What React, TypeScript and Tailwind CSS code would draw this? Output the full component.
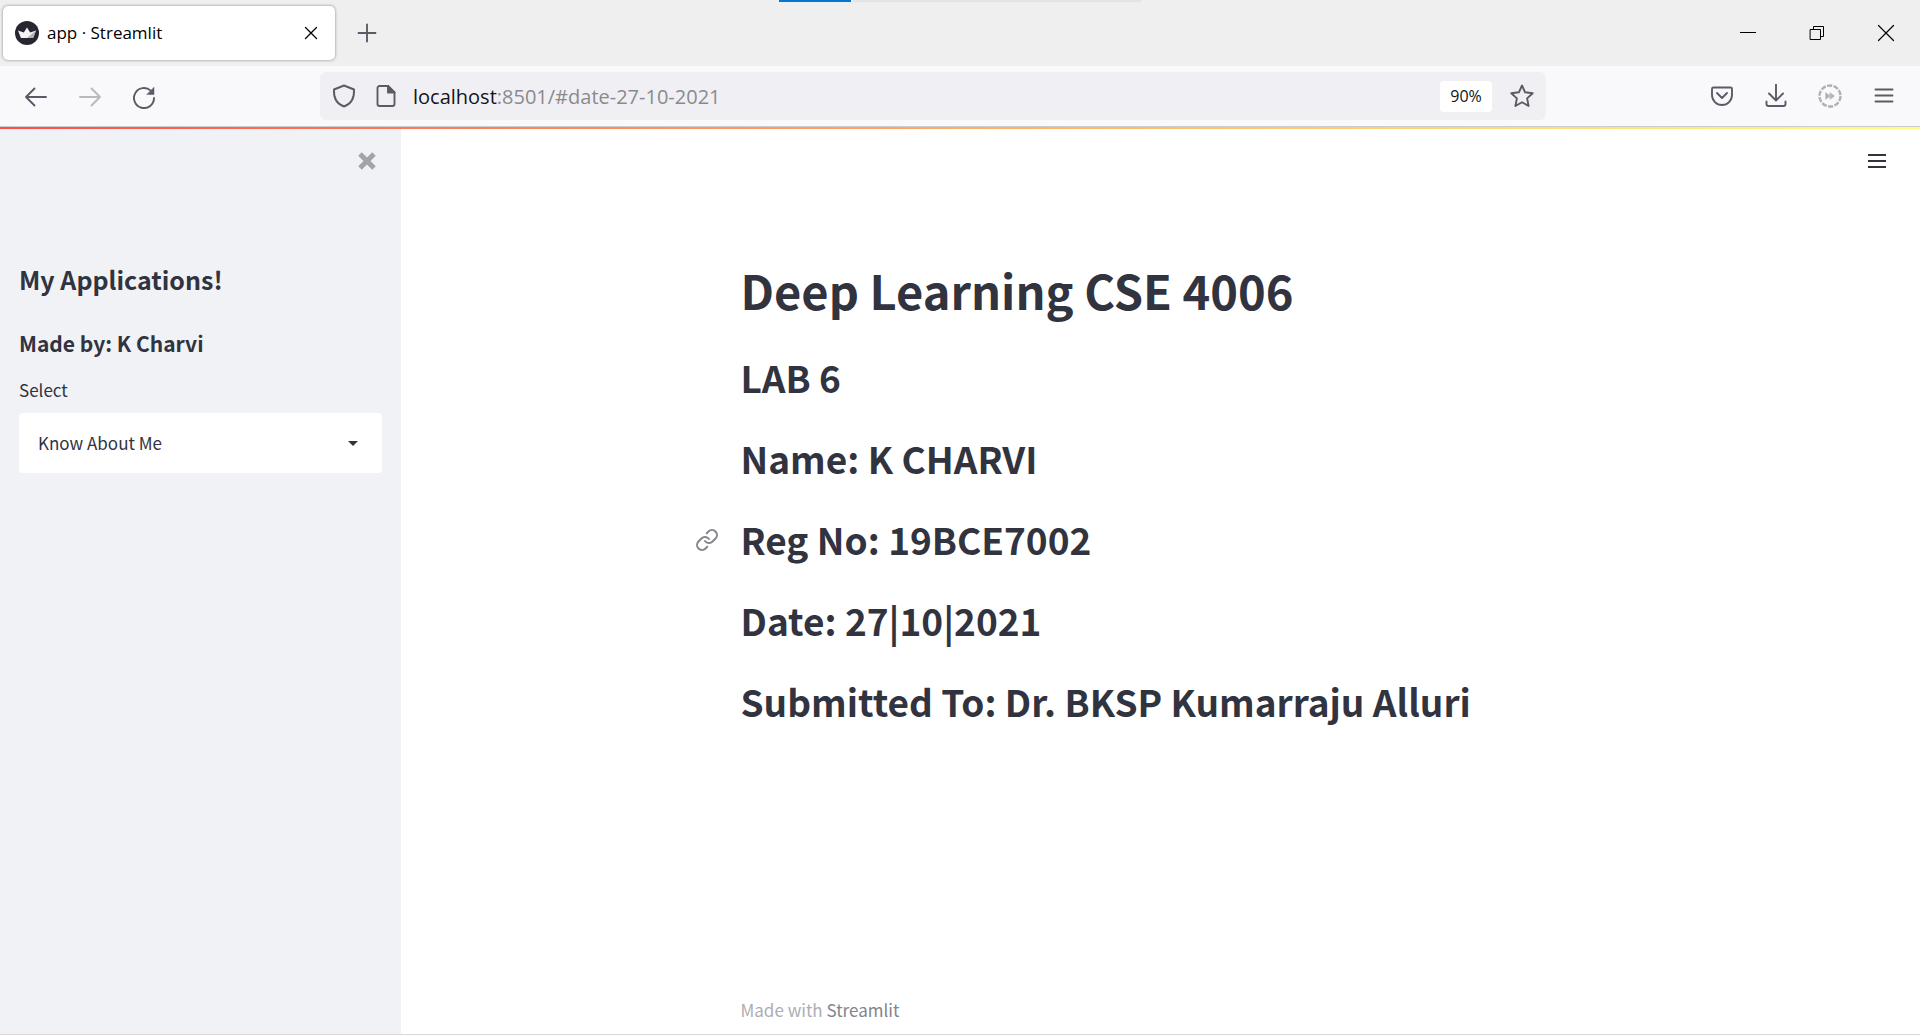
import React from "react";

const cjk = "font-['Noto_Sans_CJK_JP',sans-serif]";

function Icon({ children, className = "size-6", width = 1.9 }: { children: React.ReactNode; className?: string; width?: number }) {
  return (
    <svg viewBox="0 0 24 24" className={className} fill="none" stroke="currentColor" strokeWidth={width} strokeLinecap="round" strokeLinejoin="round" aria-hidden="true">
      {children}
    </svg>
  );
}

function TabStrip() {
  return (
    <header className="relative flex h-[66px] items-center bg-[#efefef] text-black">
      <div className="absolute left-1/2 top-0 flex h-[2px] w-[362px] -translate-x-1/2 gap-[2px]">
        <div className="w-[72px] bg-[#0078d7]" />
        <div className="flex-1 bg-[#e4e4e4]" />
      </div>
      <div className="ml-[3px] flex h-[54px] w-[332px] items-center rounded-[5px] bg-white pl-3 pr-3 shadow-[0_0_3px_rgba(80,80,100,0.7)]">
        <svg viewBox="0 0 24 24" className="size-6" aria-hidden="true">
          <circle cx="12" cy="12" r="12" fill="#262730" />
          <path d="M3 9.600 8.800 11.600 12 6.500 15.200 11.600 21 9.600 18.300 16.400Q18 17 17.200 17H6.800Q6 17 5.700 16.400Z" fill="#f4f4f4" />
          <path d="M12 17 21 9.600 18.300 16.400Q18 17 17.200 17Z" fill="#b5b5b8" />
        </svg>
        <span className="ml-2 flex-1 text-[17px] leading-6">app · Streamlit</span>
        <button aria-label="Close tab">
          <Icon className="size-6" width={1.3}><path d="M6.500 6.500 17.500 17.500M17.500 6.500 6.500 17.500" /></Icon>
        </button>
      </div>
      <button aria-label="New tab" className="ml-5 text-[#5b5b66]">
        <Icon><path d="M12 3.500v17M3.500 12h17" /></Icon>
      </button>
      <div className="ml-auto mr-[22px] flex gap-[45px]">
        <button aria-label="Minimize"><Icon width={1}><path d="M4.500 11.500h15" shapeRendering="crispEdges" /></Icon></button>
        <button aria-label="Restore"><Icon width={1}><path d="M5.500 8.500h10v10h-10zM8.500 8.500v-3h10v10h-3" strokeLinejoin="miter" /></Icon></button>
        <button aria-label="Close window"><Icon width={1.2}><path d="M4.500 4.500l15 15M19.500 4.500l-15 15" /></Icon></button>
      </div>
    </header>
  );
}

function Toolbar() {
  return (
    <nav className="flex h-[61px] items-center border-b border-[#ccccd0] bg-[#f9f9fb] pl-6 pr-6 text-[#5b5b66]">
      <div className="flex gap-[30px] pt-[2px]">
        <button aria-label="Back"><Icon><path d="M22 12H2M10.500 3.500 2 12l8.500 8.500" /></Icon></button>
        <button aria-label="Forward" className="text-[#b9b9be]"><Icon><path d="M2 12h20M13.500 3.500 22 12l-8.500 8.500" /></Icon></button>
        <button aria-label="Reload">
          <Icon><path d="M22 13a10 10 0 1 1-3.300-7.400" /><path d="M22 2.500v7h-7z" fill="currentColor" strokeWidth={0.500} /></Icon>
        </button>
      </div>
      <div className="mx-[164px] flex h-12 flex-1 items-center rounded-md bg-[#f0f0f4] pl-3">
        <Icon><path d="M12 1.500 22 5.500C22.500 14 19 20 12 22.500 5 20 1.500 14 2 5.500Z" /></Icon>
        <Icon className="ml-[18px] size-6"><path d="M14 2H5.500A2 2 0 0 0 3.500 4v16a2 2 0 0 0 2 2h13a2 2 0 0 0 2-2V8.500z" /><path d="M14 2v6.500h6.500z" fill="currentColor" /></Icon>
        <div className="relative ml-[15px] flex-1 pt-[2px] text-[20px] leading-7">
          <div aria-hidden="true" className="text-[#8a8a8e]"><span className="text-[#15141a]">localhost</span>:8501/#date-27-10-2021</div>
          <input aria-label="Address" defaultValue="localhost:8501/#date-27-10-2021" className="absolute inset-0 w-full bg-transparent text-transparent outline-none" />
        </div>
        <button className="h-[31px] w-[52px] rounded bg-white text-[16px] text-[#15141a]">90%</button>
        <button aria-label="Bookmark" className="ml-[18px] mr-3">
          <Icon><path d="M12 1.500 15.100 8.300 22.700 9.200 17.100 14.400 18.600 22 12 18.200 5.400 22 6.900 14.400 1.300 9.200 8.900 8.300Z" /></Icon>
        </button>
      </div>
      <div className="flex gap-[30px]">
        <button aria-label="Pocket"><Icon><path d="M3.500 3.500h17A1.500 1.500 0 0 1 22 5v6a10 10 0 0 1-20 0V5a1.500 1.500 0 0 1 1.500-1.500zM7 9l5 5 5-5" /></Icon></button>
        <button aria-label="Downloads"><Icon><path d="M12 .8V16M5 9.500l7 7 7-7M2.500 17.500V20a2 2 0 0 0 2 2h15a2 2 0 0 0 2-2v-2.500" /></Icon></button>
        <button aria-label="Extension" className="text-[#b1b1b3]">
          <Icon><circle cx="12" cy="12" r="10.500" strokeWidth={2.400} strokeDasharray="5.200 1.400" strokeLinecap="butt" /><path d="M8 9l4 3-4 3zM12.300 9l4 3-4 3z" fill="currentColor" strokeWidth={0.800} /></Icon>
        </button>
        <button aria-label="Menu"><Icon><path d="M3.500 5.500h17M3.500 11.500h17M3.500 17.500h17" /></Icon></button>
      </div>
    </nav>
  );
}

function Sidebar() {
  return (
    <aside className="flex w-[401px] flex-col bg-[#f0f2f6] px-[19px]">
      <button aria-label="Close sidebar" className="ml-auto mr-[3px] mt-5 text-[#a3a4ab]">
        <Icon className="size-6" width={5}><path d="M5 5l14 14M19 5 5 19" strokeLinecap="butt" /></Icon>
      </button>
      <h2 className="mt-[90px] text-[25px] font-semibold leading-8">My Applications!</h2>
      <h3 className="mt-8 text-[21px] font-semibold leading-8">Made by: K Charvi</h3>
      <label htmlFor="page" className="mt-[19px] text-[17px] leading-6">Select</label>
      <div className="relative mt-[11px]">
        <select id="page" className="h-[60px] w-full appearance-none rounded bg-white px-[19px] text-[17px]">
          <option>Know About Me</option>
        </select>
        <svg viewBox="0 0 10 5" className="pointer-events-none absolute right-6 top-7 h-[5px] w-[10px]" aria-hidden="true"><path d="M0 0h10L5 5z" fill="#31333f" /></svg>
      </div>
    </aside>
  );
}

const headings = ["LAB 6", "Name: K CHARVI", "Reg No: 19BCE7002", "Date: 27|10|2021", "Submitted To: Dr. BKSP Kumarraju Alluri"];

function Content() {
  return (
    <main className="relative flex flex-1 flex-col bg-white">
      <button aria-label="App menu" className="absolute right-[31px] top-5">
        <Icon width={2}><path d="M3 6h18M3 12h18M3 18h18" strokeLinecap="butt" /></Icon>
      </button>
      <div className="mx-auto flex w-full max-w-[840px] flex-1 flex-col pt-32">
        <h1 className="mb-[30px] text-[47px] font-bold leading-[66px]">Deep Learning CSE 4006</h1>
        <div className="flex flex-col gap-8">
          {headings.map((text) => (
            <h2 key={text} className="relative text-[37px] font-semibold leading-[49px]">
              {text.startsWith("Reg") && (
                <a href="#reg-no-19bce7002" aria-label="Link to heading" className="absolute -left-[46px] top-[13px] text-[#83848c]">
                  <Icon className="size-6" width={2}>
                    <path d="M10 13a5 5 0 0 0 7.540.540l3-3a5 5 0 0 0-7.070-7.070l-1.720 1.710" />
                    <path d="M14 11a5 5 0 0 0-7.540-.540l-3 3a5 5 0 0 0 7.070 7.070l1.710-1.710" />
                  </Icon>
                </a>
              )}
              {text}
            </h2>
          ))}
        </div>
        <footer className="mt-auto pb-3 text-[17px] leading-6 text-[#adaeb2]">
          Made with <a href="#streamlit" className="text-[#83848c]">Streamlit</a>
        </footer>
      </div>
    </main>
  );
}

export default function App() {
  return (
    <div className="flex min-h-screen flex-col font-['Open_Sans',sans-serif]">
      <TabStrip />
      <Toolbar />
      <div className="h-[2px] bg-linear-to-r from-[#ff4b4b] to-[#fffd80]" />
      <div className={`flex flex-1 border-b border-[#dcd8d8] text-[#31333f] ${cjk}`}>
        <Sidebar />
        <Content />
      </div>
    </div>
  );
}
